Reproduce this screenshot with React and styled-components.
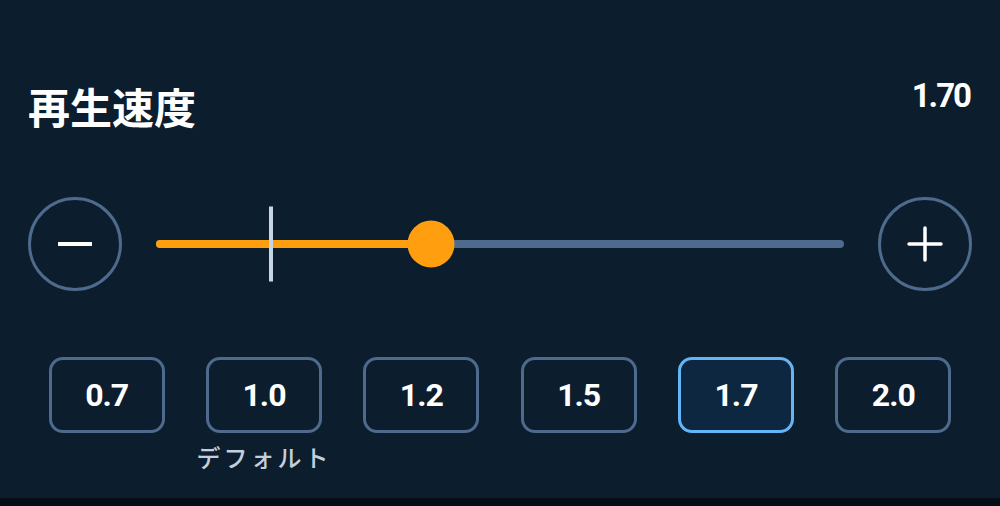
import React from 'react';
import styled, { createGlobalStyle } from 'styled-components';

const GlobalStyle = createGlobalStyle`
html, body {
  margin: 0;
  padding: 0;
  background: #050d16;
}
`;

const Screen = styled.div`
width: 1000px;
height: 506px;
background: #050d16;
overflow: hidden;
`;

const Panel = styled.div`
height: 498px;
box-sizing: border-box;
padding: 79px 28px 0 28px;
background: #0c1d2d;
display: flex;
flex-direction: column;
`;

const Header = styled.div`
display: flex;
justify-content: space-between;
align-items: flex-start;
`;

const Title = styled.h1`
margin: 6px 0 0 0;
font-family: "Noto Sans CJK JP", "Noto Sans", sans-serif;
font-size: 42px;
line-height: 1;
font-weight: 700;
color: #ffffff;
`;

const Value = styled.span`
font-family: Roboto, "Liberation Sans", sans-serif;
font-size: 33px;
line-height: 1;
font-weight: 700;
letter-spacing: -2px;
color: #ffffff;
margin-right: 2px;
`;

const SliderRow = styled.div`
margin-top: 70px;
display: flex;
align-items: center;
gap: 34px;
`;

const RoundButton = styled.button`
width: 94px;
height: 94px;
flex: none;
box-sizing: border-box;
border-radius: 50%;
border: 3px solid #4e6a8c;
background: transparent;
color: #ffffff;
padding: 0;
display: flex;
align-items: center;
justify-content: center;
cursor: pointer;
`;

const Track = styled.div`
position: relative;
flex: 1;
height: 8px;
border-radius: 4px;
background: #4e6a8c;
`;

const Fill = styled.div`
height: 100%;
border-radius: 4px;
background: #ff9f0f;
`;

const Marker = styled.div`
position: absolute;
top: 50%;
width: 4px;
height: 75px;
margin-left: -2px;
transform: translateY(-50%);
background: #c9d5e3;
`;

const Thumb = styled.div`
position: absolute;
top: 50%;
width: 47px;
height: 47px;
border-radius: 50%;
background: #ff9f0f;
transform: translate(-50%, -50%);
`;

const Presets = styled.div`
margin-top: 66px;
display: grid;
grid-template-columns: repeat(6, 1fr);
`;

const PresetCell = styled.div`
display: flex;
flex-direction: column;
align-items: center;
`;

const PresetButton = styled.button`
width: 116px;
height: 76px;
box-sizing: border-box;
border-radius: 14px;
border: 3px solid ${(p) => (p.$active ? '#64b5f6' : '#4e6a8c')};
background: ${(p) => (p.$active ? '#0d2740' : 'transparent')};
color: #ffffff;
font-family: Roboto, "Liberation Sans", sans-serif;
font-size: 32px;
font-weight: 700;
letter-spacing: -1px;
padding: 0;
cursor: pointer;
`;

const Caption = styled.span`
margin-top: 12px;
font-family: "Noto Sans CJK JP", "Noto Sans", sans-serif;
font-size: 24px;
line-height: 1;
font-weight: 500;
letter-spacing: 3px;
color: #c3cfdb;
`;

const MIN = 0.5;
const MAX = 3.5;
const pct = (v) => `${((v - MIN) / (MAX - MIN)) * 100}%`;

const presets = [0.7, 1.0, 1.2, 1.5, 1.7, 2.0];

const MinusIcon = () => (
  <svg width="34" height="34" viewBox="0 0 34 34">
    <line x1="1" y1="17" x2="33" y2="17" stroke="#fff" strokeWidth="4" strokeLinecap="round" />
  </svg>
);

const PlusIcon = () => (
  <svg width="36" height="36" viewBox="0 0 36 36">
    <line x1="2" y1="18" x2="34" y2="18" stroke="#fff" strokeWidth="3.5" strokeLinecap="round" />
    <line x1="18" y1="2" x2="18" y2="34" stroke="#fff" strokeWidth="3.5" strokeLinecap="round" />
  </svg>
);

const App = () => {
  const [speed, setSpeed] = React.useState(1.7);
  const step = (d) => setSpeed((s) => Math.min(MAX, Math.max(MIN, Math.round((s + d) * 100) / 100)));
  return (
    <Screen>
      <GlobalStyle />
      <Panel>
        <Header>
          <Title>再生速度</Title>
          <Value>{speed.toFixed(2)}</Value>
        </Header>
        <SliderRow>
          <RoundButton onClick={() => step(-0.1)} aria-label="decrease"><MinusIcon /></RoundButton>
          <Track>
            <Fill style={{ width: pct(speed) }} />
            <Marker style={{ left: pct(1.0) }} />
            <Thumb style={{ left: pct(speed) }} />
          </Track>
          <RoundButton onClick={() => step(0.1)} aria-label="increase"><PlusIcon /></RoundButton>
        </SliderRow>
        <Presets>
          {presets.map((p) => (
            <PresetCell key={p}>
              <PresetButton $active={Math.abs(p - speed) < 0.001} onClick={() => setSpeed(p)}>
                {p.toFixed(1)}
              </PresetButton>
              {p === 1.0 && <Caption>デフォルト</Caption>}
            </PresetCell>
          ))}
        </Presets>
      </Panel>
    </Screen>
  );
};

export default App;
